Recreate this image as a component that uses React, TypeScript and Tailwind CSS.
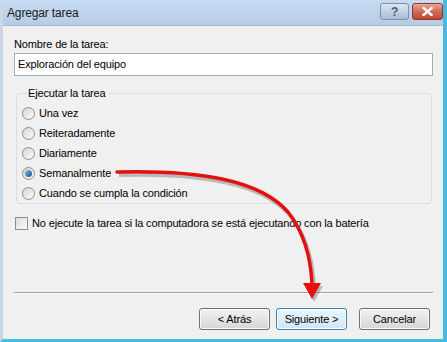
import React from 'react';

const font = { fontFamily: '"Segoe UI", "Liberation Sans", Arial, sans-serif' };

const Radio = ({ label, checked }: { label: string; checked?: boolean }) => (
    <div className="flex items-center h-[20px]">
        <span className="w-[13px] h-[13px] rounded-full border border-[#8e8f8f] bg-gradient-to-br from-[#d6d6d6] to-[#fafafa] flex items-center justify-center">
            {checked && (
                <span className="w-[7px] h-[7px] rounded-full bg-gradient-to-br from-[#7ec0f0] to-[#1a4f8f]" />
            )}
        </span>
        <span className="ml-[4px]">{label}</span>
    </div>
);

const Btn = ({ label, primary }: { label: string; primary?: boolean }) => (
    <button
        className={
            'w-[71px] h-[22px] rounded-[3px] border text-black ' +
            (primary
                ? 'border-[#3c7fb1] bg-gradient-to-b from-[#eaf6fd] to-[#cfe6f6] shadow-[inset_0_0_0_1px_#ffffff]'
                : 'border-[#707070] bg-gradient-to-b from-[#f2f2f2] to-[#d6d6d6] shadow-[inset_0_0_0_1px_#fbfbfb]')
        }
    >
        {label}
    </button>
);

export default function App() {
    return (
        <div className="relative w-[447px] h-[342px] bg-[#bcd2ea] text-[11px] tracking-[-0.15px] text-black overflow-hidden" style={font}>
            <div className="flex flex-col h-full border-l-[3px] border-l-[#c8d8ea] border-r-[4px] border-r-[#4ab8e2] border-b-[3px] border-b-[#3dc2df]">
                {/* title bar */}
                <div className="h-[25px] flex items-center bg-gradient-to-b from-[#c7dbf1] to-[#b6cce6] pl-[4px]">
                    <span className="text-[12px] text-[#1a1a1a]">Agregar tarea</span>
                    <div className="ml-auto flex items-start self-start mt-[3px] gap-[3px]">
                        <div className="w-[29px] h-[17px] rounded-[3px] border border-[#7d90a8] bg-gradient-to-b from-[#dce7f3] to-[#a9bdd6] flex items-center justify-center text-[12px] font-bold text-[#4c5b70] leading-none">
                            ?
                        </div>
                        <div className="w-[31px] h-[17px] rounded-[3px] border border-[#8c3a2c] bg-gradient-to-b from-[#e9a799] via-[#d06a55] to-[#c2452f] flex items-center justify-center">
                            <svg width="11" height="9" viewBox="0 0 11 9">
                                <path d="M1.5 1 L9.5 8 M9.5 1 L1.5 8" stroke="#ffffff" strokeWidth="2.4" strokeLinecap="square" />
                            </svg>
                        </div>
                    </div>
                </div>

                {/* body */}
                <div className="flex-1 flex flex-col bg-[#f0f0f0] pl-[11px] pr-[10px] border-t border-t-[#aab9cc]">
                    <div className="mt-[10px] h-[16px] leading-[16px]">Nombre de la tarea:</div>
                    <div className="mt-[1px] h-[23px] border border-[#a5acb5] bg-white flex items-center pl-[3px]">
                        Exploración del equipo
                    </div>

                    <fieldset className="mt-[10px] ml-[2px] mr-[1px] h-[118px] border border-[#d5dfe5] rounded-[3px] pl-[5px]">
                        <legend className="ml-[4px] px-[2px] leading-[14px]">Ejecutar la tarea</legend>
                        <div className="flex flex-col mt-[3px]">
                            <Radio label="Una vez" />
                            <Radio label="Reiteradamente" />
                            <Radio label="Diariamente" />
                            <Radio label="Semanalmente" checked />
                            <Radio label="Cuando se cumpla la condición" />
                        </div>
                    </fieldset>

                    <div className="mt-[12px] flex items-center h-[14px] pl-[1px]">
                        <span className="w-[13px] h-[13px] border border-[#8e8f8f] bg-gradient-to-br from-[#dcdcdc] to-[#fbfbfb]" />
                        <span className="ml-[4px]">No ejecute la tarea si la computadora se está ejecutando con la batería</span>
                    </div>

                    <div className="mt-[62px] h-[2px] border-t border-t-[#a0a0a0] border-b border-b-white" />

                    <div className="mt-[14px] flex justify-end gap-[6px] pr-[3px]">
                        <Btn label="< Atrás" />
                        <Btn label="Siguiente >" primary />
                        <div className="w-[0px]" />
                        <Btn label="Cancelar" />
                    </div>
                </div>
            </div>

            {/* red annotation arrow */}
            <svg className="absolute left-0 top-0 pointer-events-none" width="447" height="342" viewBox="0 0 447 342">
                <g transform="translate(2,3)" opacity="0.35">
                    <path d="M117 172 C 200 170, 260 180, 288 212 C 306 235, 311 262, 312 284" stroke="#555" strokeWidth="4" fill="none" />
                    <path d="M303 283 L321 283 L312 299 Z" fill="#555" />
                </g>
                <path d="M117 172 C 200 170, 260 180, 288 212 C 306 235, 311 262, 312 284" stroke="#e3100e" strokeWidth="3.5" fill="none" strokeLinecap="round" />
                <path d="M303 283 L321 283 L312 299 Z" fill="#e3100e" />
            </svg>
        </div>
    );
}
